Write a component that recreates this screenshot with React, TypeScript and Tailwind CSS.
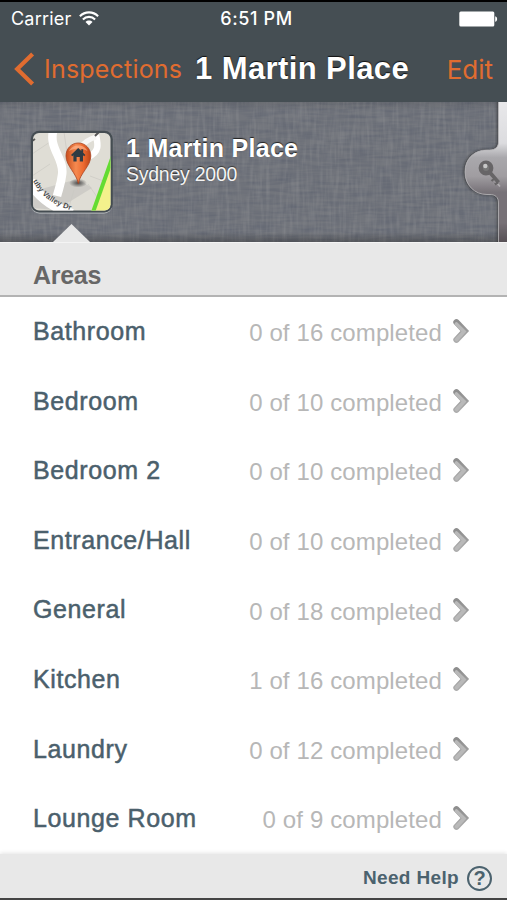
interface Area {
  name: string
  done: number
  total: number
}

const areas: Area[] = [
  { name: "Bathroom", done: 0, total: 16 },
  { name: "Bedroom", done: 0, total: 10 },
  { name: "Bedroom 2", done: 0, total: 10 },
  { name: "Entrance/Hall", done: 0, total: 10 },
  { name: "General", done: 0, total: 18 },
  { name: "Kitchen", done: 1, total: 16 },
  { name: "Laundry", done: 0, total: 12 },
  { name: "Lounge Room", done: 0, total: 9 },
]

function WifiIcon() {
  return (
    <svg width="20" height="15" viewBox="0 0 20 15" fill="none" stroke="#fff" strokeWidth="2.1">
      <path d="M0.9 5.2C5.9 0.1 14.1 0.1 19.1 5.2" />
      <path d="M3.9 8.4C7.3 5 12.7 5 16.1 8.4" />
      <path d="M10 14.4L6.5 10.9C8.5 9 11.5 9 13.5 10.9Z" fill="#fff" stroke="none" />
    </svg>
  )
}

function BatteryIcon() {
  return (
    <svg width="39" height="16" viewBox="0 0 39 16" fill="#fff">
      <rect x="0.3" y="0.5" width="35" height="15" rx="1.5" />
      <path d="M36.2 5.2C38.8 5.8 38.8 10.2 36.2 10.8Z" />
    </svg>
  )
}

function StatusBar() {
  return (
    <div className="flex h-[33px] items-center justify-between pr-[9px] pl-[11px] text-white">
      <div className="flex w-[120px] items-center gap-[8px]">
        <span className="font-['Inter',sans-serif] text-[18px] tracking-[0.2px]">Carrier</span>
        <WifiIcon />
      </div>
      <span className="mr-[-2px] font-['Inter',sans-serif] text-[18px] font-medium tracking-[0.65px]">6:51 PM</span>
      <div className="flex w-[118px] justify-end">
        <BatteryIcon />
      </div>
    </div>
  )
}

function NavBar() {
  return (
    <div className="flex h-[67px] items-center pr-[14px] pl-[14px]">
      <svg width="21" height="34" viewBox="0 0 21 34" fill="none" stroke="#e06c30" strokeWidth="4.2">
        <path d="M18.6 2L3.2 17L18.6 32" />
      </svg>
      <span className="mt-[2px] ml-[9px] w-[151px] font-['Inter',sans-serif] text-[25px] tracking-[0.2px] whitespace-nowrap text-[#e06c30]">
        Inspections
      </span>
      <h1 className="mt-[2px] text-[31px] font-bold tracking-[0.4px] whitespace-nowrap text-white [text-shadow:0_-1px_1px_#111]">
        1 Martin Place
      </h1>
      <span className="mt-[1px] ml-auto font-['Inter',sans-serif] text-[26px] text-[#e06c30]">Edit</span>
    </div>
  )
}

function LinenTexture() {
  return (
    <svg className="absolute inset-0" width="507" height="140">
      <defs>
        <filter id="weft" x="0" y="0" width="100%" height="100%" colorInterpolationFilters="sRGB">
          <feTurbulence type="fractalNoise" baseFrequency="0.04 0.3" numOctaves="2" seed="4" />
          <feColorMatrix values="0 0 0 0 0.27  0 0 0 0 0.3  0 0 0 0 0.38  0.6 0 0 0 -0.2" />
        </filter>
        <filter id="warp" x="0" y="0" width="100%" height="100%" colorInterpolationFilters="sRGB">
          <feTurbulence type="fractalNoise" baseFrequency="0.3 0.04" numOctaves="2" seed="9" />
          <feColorMatrix values="0 0 0 0 0.66  0 0 0 0 0.66  0 0 0 0 0.66  0.5 0 0 0 -0.2" />
        </filter>
        <linearGradient id="edge" x1="0" y1="0" x2="0" y2="1">
          <stop offset="0" stopColor="#222" stopOpacity="0.12" />
          <stop offset="0.06" stopColor="#222" stopOpacity="0" />
          <stop offset="0.93" stopColor="#222" stopOpacity="0" />
          <stop offset="1" stopColor="#222" stopOpacity="0.35" />
        </linearGradient>
      </defs>
      <rect width="507" height="140" fill="#72757c" />
      <rect width="507" height="140" filter="url(#weft)" />
      <rect width="507" height="140" filter="url(#warp)" />
      <rect width="507" height="140" fill="url(#edge)" />
    </svg>
  )
}

function MapThumb() {
  return (
    <svg className="relative" width="84" height="86" viewBox="0 0 84 86">
      <defs>
        <clipPath id="map">
          <rect x="3" y="3" width="77.5" height="77.5" rx="6" />
        </clipPath>
        <linearGradient id="pin" x1="0" y1="0" x2="1" y2="0">
          <stop offset="0" stopColor="#c94e1c" />
          <stop offset="0.4" stopColor="#f68a50" />
          <stop offset="0.7" stopColor="#ed6a30" />
          <stop offset="1" stopColor="#b94316" />
        </linearGradient>
        <radialGradient id="shade">
          <stop offset="0" stopColor="#222" stopOpacity="0.75" />
          <stop offset="1" stopColor="#222" stopOpacity="0" />
        </radialGradient>
        <path id="road" d="M3 51Q12 71 40 80" />
      </defs>
      <rect x="1.2" y="2.8" width="81" height="81" rx="8.5" fill="#a9adb0" />
      <rect x="0.8" y="0.8" width="82" height="81.8" rx="8.5" fill="#454d52" />
      <g clipPath="url(#map)">
        <rect width="84" height="84" fill="#dfddd5" />
        <path d="M2 24L20 12M2 46L20 34M58 54L72 74M38 80L44 60M60 46L76 52M34 2L38 30" stroke="#d1cfc8" fill="none" />
        <path d="M0 62L48 49L62 58L26 80L2 78Z" fill="#c9c8c3" opacity="0.8" />
        <path d="M24 -2C17 18 35 28 32 45C31 54 29 58 27 66" stroke="#fff" strokeWidth="8.5" fill="none" />
        <path d="M58 27C70 22 68 14 66 5" stroke="#fff" strokeWidth="6.5" fill="none" />
        <path d="M51 17Q56 10 66 7" stroke="#f7f7f5" strokeWidth="5" fill="none" />
        <path d="M0 51Q10 72 42 84" stroke="#fff" strokeWidth="10" fill="none" />
        <path d="M84 22L60 84H84Z" fill="#f3f18c" />
        <path d="M84 23L62 85" stroke="#64dc32" strokeWidth="4" />
        <path d="M65 6L69 2M2 11L5 9" stroke="#555" strokeWidth="2" />
        <text fontSize="7.5" fontWeight="700" fill="#4c4c4c">
          <textPath href="#road" textLength="49">
            uby Valley Dr
          </textPath>
        </text>
      </g>
      <ellipse cx="48" cy="53" rx="9" ry="4.5" fill="url(#shade)" />
      <path
        d="M48.3 53.5C46.4 43 36 36 36 26C36 18.5 41.5 13 48.3 13C55.2 13 60.8 18.5 60.8 26C60.8 36 50.2 43 48.3 53.5Z"
        fill="url(#pin)"
        stroke="#a94320"
        strokeWidth="0.8"
      />
      <path d="M39 21C42 13.5 54.5 13.5 57.5 21C52 17.5 44.5 17.5 39 21Z" fill="#ffc3a0" opacity="0.55" />
      <path d="M48.2 18L41 25L42.3 26.2L43.4 25.2V31.5H46.6V27H49.8V31.5H53V25.2L54.2 26.2L55.4 25L53.2 22.8V19.3H51.3V21Z" fill="#303b43" />
    </svg>
  )
}

function KeyTab() {
  return (
    <svg className="absolute top-0 right-0" width="48" height="140" viewBox="0 0 48 140">
      <defs>
        <linearGradient id="metal" x1="0" y1="0" x2="0" y2="1">
          <stop offset="0" stopColor="#e9e9eb" />
          <stop offset="0.3" stopColor="#dcdcdf" />
          <stop offset="0.4" stopColor="#a9a8ac" />
          <stop offset="0.53" stopColor="#a09da1" />
          <stop offset="0.64" stopColor="#777278" />
          <stop offset="0.85" stopColor="#777176" />
          <stop offset="1" stopColor="#544d52" />
        </linearGradient>
        <filter id="tabShadow" x="-20%" y="-10%" width="140%" height="120%">
          <feDropShadow dx="-1" dy="0" stdDeviation="1.6" floodColor="#222" floodOpacity="0.8" />
        </filter>
      </defs>
      <path
        d="M50 -2H39.5V40C39.5 45 36 48 31 48H28C14.5 48 6 57.5 6 70C6 83 15.5 92.5 28 92.5H31C36 92.5 39.5 95 39.5 101V142H50Z"
        fill="url(#metal)"
        filter="url(#tabShadow)"
      />
      <path
        d="M39.5 -2V40C39.5 45 36 48 31 48H28C14.5 48 6 57.5 6 70C6 83 15.5 92.5 28 92.5H31C36 92.5 39.5 95 39.5 101V142"
        fill="none"
        stroke="#b9b7ba"
        strokeWidth="0.8"
      />
      <path d="M33 75L41 84.5M37 81L35 82.5" stroke="#c4c2c4" strokeWidth="1.6" opacity="0.7" />
      <g stroke="#676567" fill="none">
        <circle cx="27" cy="66" r="5.2" strokeWidth="4.4" fill="#777" />
        <path d="M30.5 70L39.5 80.5" strokeWidth="3.8" />
        <path d="M36 76L32.5 79M39 80.5L35.5 82.5" strokeWidth="2.2" />
      </g>
      <circle cx="26.3" cy="64" r="2.2" fill="#c7c7c7" />
    </svg>
  )
}

function PropertyHeader() {
  return (
    <header className="relative flex h-[140px] overflow-hidden pl-[30px]">
      <LinenTexture />
      <div className="pt-[28px]">
        <MapThumb />
      </div>
      <div className="relative ml-[12px] pt-[31px] text-white">
        <h2 className="text-[25px] leading-[30px] font-bold tracking-[0.3px] [text-shadow:0_-1px_1px_#222]">
          1 Martin Place
        </h2>
        <p className="text-[19.5px] leading-[22px] tracking-[-0.25px] text-[#f4f4f4] [text-shadow:0_-1px_1px_#333]">
          Sydney 2000
        </p>
      </div>
      <KeyTab />
      <svg className="absolute bottom-0 left-[53px]" width="37" height="18" viewBox="0 0 37 18">
        <path d="M0 18L18.5 0L37 18Z" fill="#e8e8e8" />
      </svg>
    </header>
  )
}

function RowChevron() {
  return (
    <svg className="ml-[10px]" width="18" height="27" viewBox="0 0 18 27" fill="none">
      <defs>
        <linearGradient id="chevron" x1="0" y1="0" x2="0" y2="1">
          <stop offset="0" stopColor="#8e8e8e" />
          <stop offset="1" stopColor="#acacac" />
        </linearGradient>
      </defs>
      <path d="M4.4 4.2L12.8 13L4.4 21.8" stroke="url(#chevron)" strokeWidth="6.2" strokeLinecap="round" />
      <path d="M4.4 6L12 13.5L4.6 21.5" stroke="#b9b9b9" strokeWidth="3.6" strokeLinecap="round" />
    </svg>
  )
}

function AreaRow({ area }: { area: Area }) {
  return (
    <li className="flex h-[69.6px] items-center pr-[37px] pl-[33px]">
      <span className="text-[25px] tracking-[0.6px] text-[#4b606c] [-webkit-text-stroke:0.5px_#4b606c]">
        {area.name}
      </span>
      <span className="mt-[3px] ml-auto text-[24px] tracking-[0.12px] text-[#b7b7b7]">
        {area.done} of {area.total} completed
      </span>
      <RowChevron />
    </li>
  )
}

export default function App() {
  return (
    <div className="flex h-[900px] w-[507px] flex-col overflow-hidden bg-white font-['Liberation_Sans',Arial,sans-serif]">
      <div className="h-[102px] shrink-0 border-t-2 border-black bg-[#454e53]">
        <StatusBar />
        <NavBar />
      </div>
      <PropertyHeader />
      <div className="flex h-[55px] shrink-0 items-center border-t border-b-2 border-t-[#f4f4f4] border-b-[#b3b3b3] bg-[#e8e8e8] pt-[13px] pl-[33px]">
        <h3 className="text-[25px] font-bold tracking-[-0.3px] text-[#676767]">Areas</h3>
      </div>
      <ul className="h-[557px] shrink-0">
        {areas.map((area) => (
          <AreaRow key={area.name} area={area} />
        ))}
      </ul>
      <footer className="flex h-[46px] items-center justify-end gap-[8px] border-b-2 border-[#444] bg-[#e8e8e8] pt-[4px] pr-[15px] text-[#4b626e] shadow-[0_-1px_4px_#e4e4e4]">
        <span className="text-[19px] font-bold tracking-[0.35px]">Need Help</span>
        <span className="flex size-[25px] items-center justify-center rounded-full border-2 border-[#4b626e] text-[20px] font-bold">
          ?
        </span>
      </footer>
    </div>
  )
}
